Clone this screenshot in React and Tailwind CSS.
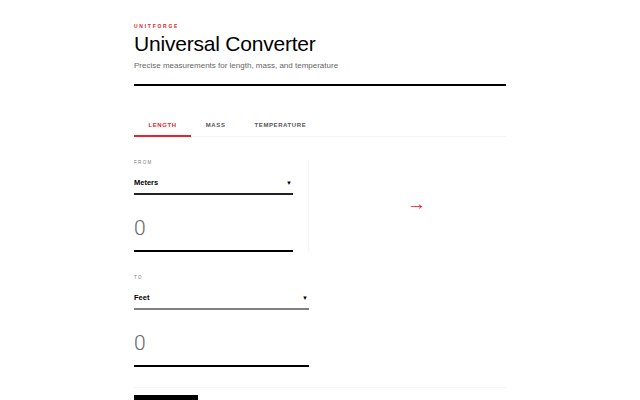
import React, { useState } from "react";

const tabs = ["Length", "Mass", "Temperature"];

const UnitSelect = ({ value, tone }) => (
    <div className={`flex items-center justify-between pt-[2px] pb-[4px] border-b-2 ${tone}`}>
        <span className="text-[7.5px] font-bold leading-[12px] text-black">{value}</span>
        <span className="text-[6px] leading-[12px] text-black mr-[1px]">▼</span>
    </div>
);

const Field = ({ label, unit, tone }) => (
    <div>
        <div className="text-[4.5px] leading-[5px] tracking-[0.3em] text-[#777] uppercase">{label}</div>
        <div className="mt-[10px]">
            <UnitSelect value={unit} tone={tone} />
        </div>
        <div className="mt-[11px] h-[46px] border-b-2 border-black flex items-center">
            <span className="font-['Roboto',sans-serif] font-light text-[21px] leading-[42px] text-[#666]">0</span>
        </div>
    </div>
);

export default function App() {
    const [active, setActive] = useState("Length");

    return (
        <div className="min-h-screen bg-white font-['Liberation_Sans',Arial,sans-serif] overflow-hidden">
            <div className="mx-auto w-[372px] pt-[22px]">
                <header className="pb-[12px] border-b-2 border-black">
                    <div className="text-[5px] leading-[8px] font-bold tracking-[0.35em] text-[#e8222a]">UNITFORGE</div>
                    <h1 className="mt-[1px] text-[21px] leading-[26px] text-black tracking-[-0.01em]">Universal Converter</h1>
                    <p className="mt-[3px] text-[8px] leading-[12px] text-[#666]">Precise measurements for length, mass, and temperature</p>
                </header>

                <nav className="mt-[24px] flex border-b border-gray-100">
                    {tabs.map((tab) => (
                        <button
                            key={tab}
                            onClick={() => setActive(tab)}
                            className={`-mb-px px-[14.5px] pt-[10px] pb-[5px] text-[6px] leading-[10px] font-bold uppercase tracking-[0.1em] border-b-2 ${
                                active === tab ? "text-[#e8222a] border-[#e8222a]" : "text-[#555] border-transparent"
                            }`}
                        >
                            {tab}
                        </button>
                    ))}
                </nav>

                <div className="mt-[23px] flex">
                    <div className="w-[175px] pr-[15px] border-r border-gray-100">
                        <Field label="From" unit="Meters" tone="border-[#222]" />
                    </div>
                    <div className="flex-1 flex items-center justify-center pl-[18px]">
                        <span className="mb-[6px] text-[#f0141e] text-[19px] leading-none">→</span>
                    </div>
                </div>

                <div className="mt-[23px] w-[175px]">
                    <Field label="To" unit="Feet" tone="border-[#808080]" />
                </div>

                <div className="mt-[20px] border-t border-gray-100" />
                <button aria-label="Swap units" className="mt-[7px] w-[64px] h-[32px] bg-black" />
            </div>
        </div>
    );
}
